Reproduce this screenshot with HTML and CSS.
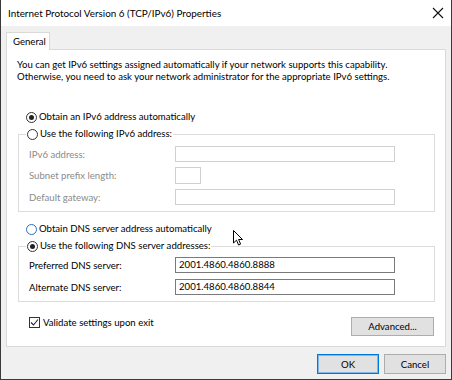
FILE: index.html
```html
<!DOCTYPE html>
<html lang="en">
<head>
  <meta charset="UTF-8">
  <title>Internet Protocol Version 6 (TCP/IPv6) Properties</title>
  <link rel="stylesheet" href="styles.css">
</head>
<body>
  <div class="window">
    <div class="titlebar">
      <span class="title">Internet Protocol Version 6 (TCP/IPv6) Properties</span>
      <svg class="close" width="12" height="12" viewBox="0 0 12 12">
        <path d="M1 1 L11 11 M11 1 L1 11" stroke="#111" stroke-width="1.1" fill="none"/>
      </svg>
    </div>

    <div class="content">
      <div class="tabs">
        <div class="tab">General</div>
      </div>

      <div class="panel">
        <p class="intro">You can get IPv6 settings assigned automatically if your network supports this capability.<br>Otherwise, you need to ask your network administrator for the appropriate IPv6 settings.</p>

        <div class="option first"><span class="radio checked"></span>Obtain an IPv6 address automatically</div>

        <fieldset class="group ip-group">
          <legend class="option"><span class="radio"></span>Use the following IPv6 address:</legend>
          <div class="field disabled">
            <label>IPv6 address:</label>
            <span class="input wide"></span>
          </div>
          <div class="field disabled">
            <label>Subnet prefix length:</label>
            <span class="input short"></span>
          </div>
          <div class="field disabled">
            <label>Default gateway:</label>
            <span class="input wide"></span>
          </div>
        </fieldset>

        <div class="option dns-auto"><span class="radio hover"></span>Obtain DNS server address automatically</div>

        <fieldset class="group dns-group">
          <legend class="option"><span class="radio checked"></span>Use the following DNS server addresses:</legend>
          <div class="field">
            <label>Preferred DNS server:</label>
            <span class="input wide">2001.4860.4860.8888</span>
          </div>
          <div class="field">
            <label>Alternate DNS server:</label>
            <span class="input wide">2001.4860.4860.8844</span>
          </div>
        </fieldset>

        <div class="panel-footer">
          <div class="check">
            <span class="checkbox">
              <svg width="9" height="9" viewBox="0 0 9 9"><path d="M1 4.5 L3.5 7 L8 1.5" stroke="#222" stroke-width="1.1" fill="none"/></svg>
            </span>
            Validate settings upon exit
          </div>
          <button class="btn advanced">Advanced...</button>
        </div>
      </div>

      <div class="actions">
        <button class="btn default">OK</button>
        <button class="btn">Cancel</button>
      </div>
    </div>

    <svg class="cursor" width="12" height="16" viewBox="0 0 12 16">
      <path d="M0.5 0.5 L0.5 13 L3.5 10.2 L5.6 15 L7.6 14.1 L5.6 9.5 L9.5 9.5 Z" fill="#fff" stroke="#000" stroke-width="1"/>
    </svg>
  </div>
</body>
</html>
```

FILE: styles.css
```css
* {
  box-sizing: border-box;
}

body {
  margin: 0;
  padding: 0;
  background-color: #2b2b2b;
  font-family: Lato, "Noto Sans", sans-serif;
  font-size: 9.6px;
  color: #000;
}

.window {
  position: relative;
  width: 452px;
  height: 380px;
  background-color: #f0f0f0;
  border: 1px solid #3a3a3a;
  border-top: none;
}

.titlebar {
  height: 26px;
  background-color: #fff;
  display: flex;
  align-items: center;
  justify-content: space-between;
  padding: 0 7px 0 7px;
}

.title {
  font-size: 9.9px;
}

.close {
  display: block;
}

.content {
  padding: 6px 5px 0 5px;
}

.tabs {
  display: flex;
}

.tab {
  position: relative;
  z-index: 1;
  width: 44px;
  height: 18px;
  margin-bottom: -1px;
  padding: 1px 0 0 6px;
  background-color: #fff;
  border: 1px solid #d9d9d9;
  border-bottom: none;
  line-height: 15px;
}

.panel {
  background-color: #fff;
  border: 1px solid #d9d9d9;
  padding: 9px 0 10px 0;
}

.intro {
  margin: 0 0 27px 10px;
  line-height: 12px;
}

.option {
  display: flex;
  align-items: center;
  height: 14px;
  line-height: 14px;
}

.option.first {
  margin-left: 19px;
}

.radio {
  width: 11px;
  height: 11px;
  margin-right: 2px;
  border: 1px solid #333;
  border-radius: 50%;
  background-color: #fff;
  display: flex;
  align-items: center;
  justify-content: center;
}

.radio.checked::after {
  content: "";
  width: 5px;
  height: 5px;
  border-radius: 50%;
  background-color: #222;
}

.radio.hover {
  border-color: #2a6fc4;
}

.group {
  margin: 3px 10px 0 11px;
  border: 1px solid #dcdcdc;
  padding: 0 0 6px 10px;
}

.group legend {
  margin-left: -3px;
  padding: 0 1px;
}

.ip-group .field + .field {
  margin-top: 5.5px;
}

.dns-group .field + .field {
  margin-top: 6px;
}

.field {
  display: flex;
  align-items: center;
  height: 16px;
}

.field:first-of-type {
  margin-top: 5px;
}

.dns-group .field:first-of-type {
  margin-top: 4px;
}

.field label {
  width: 146px;
}

.field.disabled label {
  color: #8a8a8a;
}

.input {
  height: 16px;
  border: 1px solid #7a7a7a;
  padding: 0 3px;
  line-height: 14px;
  background-color: #fff;
}

.field.disabled .input {
  border-color: #d0d0d0;
}

.input.wide {
  width: 220px;
}

.input.short {
  width: 26px;
  height: 17px;
}

.dns-auto {
  margin: 10px 0 0 19px;
}

.panel-footer {
  display: flex;
  justify-content: space-between;
  align-items: flex-start;
  margin: 15px 11px 0 22px;
}

.check {
  display: flex;
  align-items: center;
  height: 11px;
}

.checkbox {
  width: 11px;
  height: 11px;
  margin-right: 3px;
  border: 1px solid #333;
  display: flex;
  align-items: center;
  justify-content: center;
}

.checkbox svg {
  display: block;
}

.btn {
  font-family: inherit;
  font-size: 9.6px;
  color: #000;
  background-color: #e1e1e1;
  border: 1px solid #adadad;
  padding: 0;
  margin: 0;
  height: 20px;
  width: 62px;
}

.advanced {
  width: 83px;
  height: 19px;
}

.btn.default {
  border: 1px solid #0078d7;
  box-shadow: inset 0 0 0 1px #7fb8e8;
}

.actions {
  display: flex;
  justify-content: flex-end;
  gap: 5px;
  margin-top: 7px;
}

.cursor {
  position: absolute;
  left: 232px;
  top: 230px;
}
```
